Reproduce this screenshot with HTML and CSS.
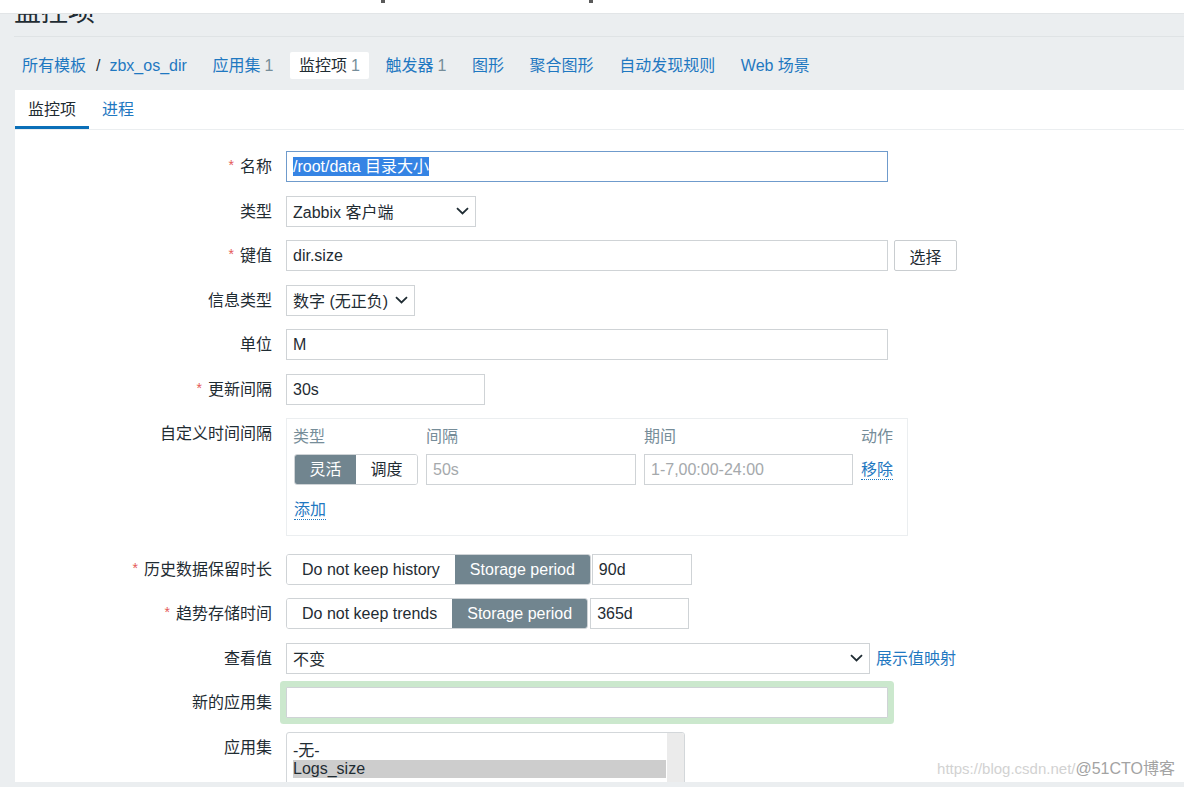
FILE: index.html
```html
<!DOCTYPE html>
<html lang="zh-CN">
<head>
<meta charset="utf-8">
<title>监控项</title>
<link rel="stylesheet" href="styles.css">
</head>
<body>
<div class="topstrip"><span class="mark m1"></span><span class="mark m2"></span></div>
<div class="page">
  <header class="titlebar"><h1>监控项</h1></header>
  <nav class="nav">
    <span class="crumbs"><a>所有模板</a><span class="sep">/</span><a>zbx_os_dir</a></span>
    <a class="nav-item">应用集<span class="count">1</span></a>
    <span class="nav-item selected">监控项<span class="count">1</span></span>
    <a class="nav-item">触发器<span class="count">1</span></a>
    <a class="nav-item">图形</a>
    <a class="nav-item">聚合图形</a>
    <a class="nav-item">自动发现规则</a>
    <a class="nav-item">Web 场景</a>
  </nav>
  <main class="panel">
    <div class="tabs"><span class="tab active">监控项</span><a class="tab">进程</a></div>
    <div class="form">
      <div class="row">
        <label class="label req">名称</label>
        <div class="input input-wide input-focus"><span class="selection">/root/data 目录大小</span></div>
      </div>
      <div class="row">
        <label class="label">类型</label>
        <div class="select select-type"><span>Zabbix 客户端</span><svg class="chev" width="13" height="8" viewBox="0 0 13 8"><path d="M1 1.2 L6.5 6.5 L12 1.2" fill="none" stroke="#1f2c33" stroke-width="1.8"/></svg></div>
      </div>
      <div class="row">
        <label class="label req">键值</label>
        <div class="input input-wide">dir.size</div>
        <button class="btn" type="button">选择</button>
      </div>
      <div class="row">
        <label class="label">信息类型</label>
        <div class="select select-info"><span>数字 (无正负)</span><svg class="chev" width="13" height="8" viewBox="0 0 13 8"><path d="M1 1.2 L6.5 6.5 L12 1.2" fill="none" stroke="#1f2c33" stroke-width="1.8"/></svg></div>
      </div>
      <div class="row">
        <label class="label">单位</label>
        <div class="input input-wide">M</div>
      </div>
      <div class="row">
        <label class="label req">更新间隔</label>
        <div class="input input-short">30s</div>
      </div>
      <div class="row row-custom">
        <label class="label">自定义时间间隔</label>
        <div class="ci-box">
          <div class="ci-grid ci-head">
            <span>类型</span><span>间隔</span><span>期间</span><span>动作</span>
          </div>
          <div class="ci-grid">
            <div class="seg"><span class="seg-item on">灵活</span><span class="seg-item">调度</span></div>
            <div class="input placeholder">50s</div>
            <div class="input placeholder">1-7,00:00-24:00</div>
            <a class="link dotted">移除</a>
          </div>
          <a class="link dotted add">添加</a>
        </div>
      </div>
      <div class="row">
        <label class="label req">历史数据保留时长</label>
        <div class="seg seg-wide"><span class="seg-item">Do not keep history</span><span class="seg-item on">Storage period</span></div>
        <div class="input input-days">90d</div>
      </div>
      <div class="row">
        <label class="label req">趋势存储时间</label>
        <div class="seg seg-wide"><span class="seg-item">Do not keep trends</span><span class="seg-item on">Storage period</span></div>
        <div class="input input-days trend">365d</div>
      </div>
      <div class="row">
        <label class="label">查看值</label>
        <div class="select select-value"><span>不变</span><svg class="chev" width="13" height="8" viewBox="0 0 13 8"><path d="M1 1.2 L6.5 6.5 L12 1.2" fill="none" stroke="#1f2c33" stroke-width="1.8"/></svg></div>
        <a class="link map-link">展示值映射</a>
      </div>
      <div class="row">
        <label class="label">新的应用集</label>
        <div class="input input-wide input-glow"></div>
      </div>
      <div class="row">
        <label class="label">应用集</label>
        <div class="listbox">
          <div class="options">
            <div class="option">-无-</div>
            <div class="option chosen">Logs_size</div>
          </div>
          <div class="scrolltrack"></div>
        </div>
      </div>
    </div>
  </main>
</div>
<div class="watermark"><span class="wm-url">https://blog.csdn.net/</span><span class="wm-brand">@51CTO博客</span></div>
</body>
</html>
```

FILE: styles.css
```css
* { box-sizing: border-box; }
html, body { margin: 0; padding: 0; }
body {
  width: 1184px;
  height: 787px;
  overflow: hidden;
  position: relative;
  background: #ebeef0;
  font-family: "Liberation Sans", Arial, "Noto Sans CJK SC", sans-serif;
  font-size: 16px;
  color: #1f2c33;
}
a { color: #1f78c1; text-decoration: none; }

.topstrip {
  height: 14px;
  background: #fff;
  border-bottom: 1px solid #e2e5e7;
  display: flex;
  position: relative;
  z-index: 2;
}
.mark { width: 4px; height: 3px; background: #5a5a5a; }
.m1 { margin-left: 381px; }
.m2 { margin-left: 204px; }

.page { padding-left: 15px; }

.titlebar {
  height: 23px;
  overflow: hidden;
  border-bottom: 1px solid #dfe3e5;
  margin-left: -1px;
}
.titlebar h1 {
  margin: -20px 0 0 0;
  font-size: 27px;
  line-height: 36px;
  font-weight: normal;
  color: #1f2c33;
}

.nav {
  height: 53px;
  padding-top: 15px;
  display: flex;
  align-items: flex-start;
  gap: 7.6px;
  white-space: nowrap;
}
.crumbs { line-height: 27px; padding: 0 9px 0 7px; }
.sep { color: #1f2c33; margin: 0 9px 0 10px; }
.nav-item { line-height: 27px; padding: 0 9px; }
.nav-item.selected { background: #fff; color: #1f2c33; border-radius: 2px; }
.count { color: #768d99; margin-left: 4px; }

.panel {
  background: #fff;
  height: 692px;
  overflow: hidden;
}
.tabs {
  display: flex;
  height: 40px;
  border-bottom: 1px solid #ebeef0;
}
.tab { padding: 0 13px; line-height: 39px; height: 39px; }
.tab.active { color: #1f2c33; box-shadow: inset 0 -3px 0 #0a6fb8; }

.form { padding-top: 21px; }
.row {
  display: flex;
  align-items: flex-start;
  margin-bottom: 13.5px;
}
.row-custom { margin-bottom: 17.5px; }
.label {
  width: 257px;
  height: 31px;
  flex: none;
  margin-right: 14px;
  text-align: right;
  line-height: 31px;
  white-space: nowrap;
  color: #1f2c33;
}
.req::before {
  content: "*";
  color: #e45959;
  font-size: 14px;
  line-height: 0;
  margin-right: 6px;
  position: relative;
  top: -2px;
}

.input {
  height: 31px;
  border: 1px solid #cfd3d6;
  background: #fff;
  padding: 0 6px;
  line-height: 29px;
  white-space: nowrap;
  overflow: hidden;
}
.input-wide { width: 602px; }
.input-short { width: 199px; }
.input-days { width: 100px; margin-left: 1px; }
.input-days.trend { width: 99px; margin-left: 2px; }
.input-focus { border-color: #6f9bcc; }
.selection { background: #3584e4; color: #fff; padding: 1px 0; }
.input-glow { box-shadow: 0 0 0 6px #cbe8cd; border-radius: 1px; }
.placeholder { color: #a5a9ac; }

.select {
  height: 31px;
  border: 1px solid #cfd3d6;
  background: #fff;
  padding: 0 6px;
  display: flex;
  align-items: center;
  justify-content: space-between;
  white-space: nowrap;
}
.select-type { width: 190px; }
.select-info { width: 129px; }
.select-value { width: 584px; }
.chev { flex: none; }

.btn {
  margin-left: 6px;
  width: 63px;
  height: 31px;
  border: 1px solid #c9cdd0;
  border-radius: 2px;
  background: #fff;
  font: inherit;
  color: #1f2c33;
  padding: 0;
}

.ci-box {
  width: 622px;
  border: 1px solid #ebeef0;
  padding: 0 7px 15px;
}
.ci-grid {
  display: grid;
  grid-template-columns: 124px 210px 209px auto;
  column-gap: 8px;
  align-items: center;
}
.ci-head {
  height: 35px;
  line-height: 35px;
  color: #768d99;
}
.ci-head span:first-child { margin-left: -1px; }

.seg {
  display: flex;
  height: 31px;
  border: 1px solid #cfd3d6;
  border-radius: 3px;
  overflow: hidden;
  white-space: nowrap;
}
.seg-item {
  flex: 1;
  text-align: center;
  line-height: 29px;
  color: #1f2c33;
  background: #fff;
}
.seg-item.on { background: #71858f; color: #fff; }
.seg-wide .seg-item { flex: none; padding: 0 15px; }

.link { color: #1f78c1; }
.dotted { border-bottom: 1px dotted #1f78c1; line-height: 19px; justify-self: start; }
.add { display: inline-block; margin-top: 15px; }
.map-link { margin-left: 6px; line-height: 31px; }

.listbox {
  width: 399px;
  height: 70px;
  border: 1px solid #d3d7da;
  border-radius: 3px;
  display: flex;
  overflow: hidden;
}
.options { flex: 1; padding: 9px 0 0 6px; }
.option { line-height: 18px; color: #1f2c33; }
.option.chosen { background: #cdcdcd; }
.scrolltrack { width: 17px; margin-left: 1px; background: #ebebeb; }

.watermark {
  position: absolute;
  right: 9px;
  bottom: 9px;
  white-space: nowrap;
  line-height: 18px;
}
.wm-url { color: #d2d2d2; font-size: 15px; }
.wm-brand { color: #a3a3a3; font-size: 16px; }
```
